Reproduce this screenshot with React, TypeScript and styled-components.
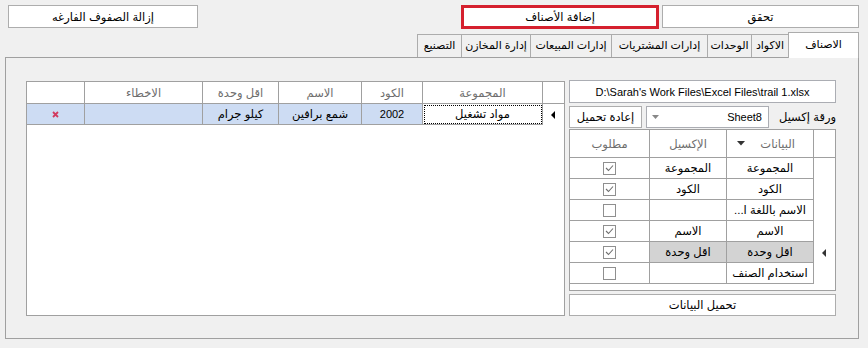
import React from "react";
import styled, { createGlobalStyle, css } from "styled-components";

const GlobalStyle = createGlobalStyle`
  html, body { margin: 0; padding: 0; background: #f0f0f0; }
  * { box-sizing: border-box; }
`;

const Window = styled.div`
  width: 868px;
  height: 348px;
  background: #f0f0f0;
  font-family: "Liberation Sans", "DejaVu Sans", sans-serif;
  font-size: 11.5px;
  color: #000;
  display: flex;
  flex-direction: column;
  overflow: hidden;
`;

const Latin = styled.span`
  font-size: 11px;
`;

const TopBar = styled.div`
  display: flex;
  align-items: flex-start;
  padding: 5px 9px 0 8px;
  height: 29px;
`;

const Spacer = styled.div`
  flex: 1;
`;

const Button = styled.button<{ $w?: number; $h?: number; $danger?: boolean; $gapLeft?: number }>`
  width: ${(p) => (p.$w ? `${p.$w}px` : "100%")};
  height: ${(p) => p.$h ?? 23}px;
  margin-left: ${(p) => p.$gapLeft ?? 0}px;
  background: #fff;
  border: 1px solid #adadad;
  font: inherit;
  color: #000;
  padding: 0;
  display: flex;
  align-items: center;
  justify-content: center;
  direction: rtl;
  white-space: nowrap;
  ${(p) =>
    p.$danger &&
    css`
      border: 3px solid #d5202e;
    `}
`;

const TabStrip = styled.div`
  display: flex;
  direction: rtl;
  align-items: flex-end;
  height: 25px;
  margin-top: 3px;
  padding-right: 9px;
  position: relative;
  z-index: 1;
  font-size: 11px;
`;

const Tab = styled.div<{ $w: number; $active?: boolean }>`
  width: ${(p) => p.$w}px;
  height: ${(p) => (p.$active ? 26 : 23)}px;
  margin-bottom: ${(p) => (p.$active ? -1 : 0)}px;
  border: 1px solid #acacac;
  border-bottom: none;
  background: ${(p) => (p.$active ? "#ffffff" : "#f0f0f0")};
  display: flex;
  align-items: center;
  justify-content: center;
  padding-bottom: ${(p) => (p.$active ? 3 : 1)}px;
  white-space: nowrap;
  & + & {
    margin-inline-start: -1px;
  }
`;

const Panel = styled.div`
  margin: 0 9px 0 5px;
  height: 282px;
  border: 1px solid #a0a0a0;
  background: #f0f0f0;
  padding: 22px 22px 22px 20px;
  display: flex;
  gap: 4px;
`;

const LeftGrid = styled.div`
  width: 539px;
  margin-top: 1px;
  height: 235px;
  border: 1px solid #a0a0a0;
  background: #fff;
  display: grid;
  grid-template-columns: 58px 118px 76px 83px 61px 120px 21px;
  grid-template-rows: 22px 21px;
  align-content: start;
`;

const HeadCell = styled.div<{ $last?: boolean }>`
  border-right: ${(p) => (p.$last ? "none" : "1px solid #a0a0a0")};
  border-bottom: 1px solid #a0a0a0;
  color: #6d6d6d;
  display: flex;
  align-items: center;
  justify-content: center;
  direction: rtl;
  white-space: nowrap;
`;

const DataCell = styled.div<{ $bg?: string; $focus?: boolean; $noBottom?: boolean; $last?: boolean }>`
  background: ${(p) => p.$bg ?? "#fff"};
  border-right: ${(p) => (p.$last ? "none" : "1px solid #a0a0a0")};
  border-bottom: ${(p) => (p.$noBottom ? "none" : "1px solid #a0a0a0")};
  display: flex;
  align-items: center;
  justify-content: center;
  direction: rtl;
  white-space: nowrap;
  overflow: hidden;
  ${(p) =>
    p.$focus &&
    css`
      outline: 1px dotted #000;
      outline-offset: -2px;
    `}
`;

const RightCol = styled.div`
  width: 267px;
  display: flex;
  flex-direction: column;
`;

const PathBox = styled.div`
  height: 23px;
  border: 1px solid #abadb3;
  background: #fff;
  display: flex;
  align-items: center;
  justify-content: center;
  white-space: nowrap;
`;

const SheetRow = styled.div`
  margin-top: 3px;
  height: 22px;
  display: flex;
  align-items: center;
  gap: 4px;
`;

const Combo = styled.div`
  width: 123px;
  height: 22px;
  border: 1px solid #abadb3;
  background: #fff;
  display: flex;
  align-items: center;
  justify-content: space-between;
  padding: 0 6px 0 5px;
`;

const Label = styled.div`
  flex: 1;
  text-align: right;
  direction: rtl;
  white-space: nowrap;
`;

const MapGrid = styled.div`
  margin-top: 1px;
  height: 162px;
  border: 1px solid #a0a0a0;
  background: #fff;
  display: grid;
  grid-template-columns: 80px 77px 87px 21px;
  grid-template-rows: 28px repeat(6, 21px);
  align-content: start;
`;

const BottomButton = styled(Button)`
  margin-top: 3px;
`;

const Check = styled.span`
  width: 13px;
  height: 13px;
  border: 1px solid #8f8f8f;
  background: #fff;
  display: inline-flex;
  align-items: center;
  justify-content: center;
`;

const HeaderInner = styled.span`
  width: 100%;
  display: flex;
  align-items: center;
  justify-content: space-between;
  padding: 0 18px 0 10px;
  direction: ltr;
`;

const Arrow = ({ color = "#000" }: { color?: string }) => (
  <svg width="5" height="8" viewBox="0 0 5 8">
    <polygon points="4,0 4,8 0,4" fill={color} />
  </svg>
);

const Down = ({ color = "#444", w = 8 }: { color?: string; w?: number }) => (
  <svg width={w} height={w / 2 + 1} viewBox="0 0 8 5">
    <polygon points="0,0 8,0 4,4.5" fill={color} />
  </svg>
);

const CheckBox = ({ checked }: { checked?: boolean }) => (
  <Check>
    {checked && (
      <svg width="9" height="8" viewBox="0 0 9 8">
        <polyline points="1,4 3.5,6.5 8,1.5" fill="none" stroke="#6f6f6f" strokeWidth="1.1" />
      </svg>
    )}
  </Check>
);

const ErrMark = () => (
  <svg width="7" height="7" viewBox="0 0 7 7">
    <path d="M1 1 L6 6 M6 1 L1 6" stroke="#d23a5f" strokeWidth="1.8" />
  </svg>
);

const tabs = [
  { t: "الاصناف", w: 71, active: true },
  { t: "الاكواد", w: 38 },
  { t: "الوحدات", w: 45 },
  { t: "إدارات المشتريات", w: 97 },
  { t: "إدارات المبيعات", w: 82 },
  { t: "إدارة المخازن", w: 70 },
  { t: "التصنيع", w: 45 },
];

const rows: { data: string; excel: string; req: boolean; current?: boolean }[] = [
  { data: "المجموعة", excel: "المجموعة", req: true },
  { data: "الكود", excel: "الكود", req: true },
  { data: "الاسم باللغة ا...", excel: "", req: false },
  { data: "الاسم", excel: "الاسم", req: true },
  { data: "اقل وحدة", excel: "اقل وحدة", req: true, current: true },
  { data: "استخدام الصنف", excel: "", req: false },
];

const BLUE = "#cddcf3";
const GRAY = "#d3d3d3";

export default function App() {
  return (
    <Window>
      <GlobalStyle />
      <TopBar>
        <Button $w={190}>إزالة الصفوف الفارغه</Button>
        <Spacer />
        <Button $w={198} $h={24} $danger>
          إضافة الأصناف
        </Button>
        <Button $w={197} $gapLeft={3}>
          تحقق
        </Button>
      </TopBar>
      <TabStrip>
        {tabs.map((t) => (
          <Tab key={t.t} $w={t.w} $active={t.active}>
            {t.t}
          </Tab>
        ))}
      </TabStrip>
      <Panel>
        <LeftGrid>
          <HeadCell></HeadCell>
          <HeadCell>الاخطاء</HeadCell>
          <HeadCell>اقل وحدة</HeadCell>
          <HeadCell>الاسم</HeadCell>
          <HeadCell>الكود</HeadCell>
          <HeadCell>المجموعة</HeadCell>
          <HeadCell $last></HeadCell>
          <DataCell $bg={BLUE}>
            <ErrMark />
          </DataCell>
          <DataCell $bg={BLUE}></DataCell>
          <DataCell $bg={BLUE}>كيلو جرام</DataCell>
          <DataCell $bg={BLUE}>شمع برافين</DataCell>
          <DataCell $bg={BLUE}>
            <Latin>2002</Latin>
          </DataCell>
          <DataCell $focus>مواد تشغيل</DataCell>
          <DataCell $noBottom $last>
            <Arrow />
          </DataCell>
        </LeftGrid>
        <RightCol>
          <PathBox>
            <Latin>D:\Sarah's Work Files\Excel Files\trail 1.xlsx</Latin>
          </PathBox>
          <SheetRow>
            <Button $w={73} $h={22}>
              إعادة تحميل
            </Button>
            <Combo>
              <Down color="#888" w={7} />
              <Latin>Sheet8</Latin>
            </Combo>
            <Label>ورقة إكسيل</Label>
          </SheetRow>
          <MapGrid>
            <HeadCell>مطلوب</HeadCell>
            <HeadCell>الإكسيل</HeadCell>
            <HeadCell>
              <HeaderInner>
                <Down color="#333" w={8} />
                <span dir="rtl">البيانات</span>
              </HeaderInner>
            </HeadCell>
            <HeadCell $last></HeadCell>
            {rows.map((r) => (
              <React.Fragment key={r.data}>
                <DataCell>
                  <CheckBox checked={r.req} />
                </DataCell>
                <DataCell $bg={r.current ? GRAY : undefined}>{r.excel}</DataCell>
                <DataCell $bg={r.current ? GRAY : undefined}>{r.data}</DataCell>
                <DataCell $noBottom $last>
                  {r.current && <Arrow color="#333" />}
                </DataCell>
              </React.Fragment>
            ))}
          </MapGrid>
          <BottomButton $h={22}>تحميل البيانات</BottomButton>
        </RightCol>
      </Panel>
    </Window>
  );
}
